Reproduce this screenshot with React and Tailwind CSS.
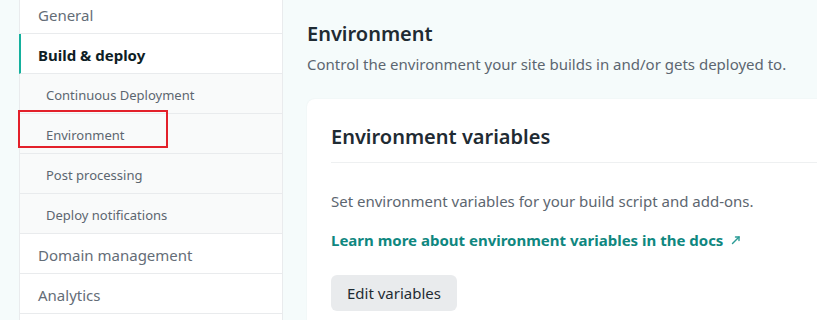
import React from "react";

const font = { fontFamily: '"Noto Sans", "Open Sans", sans-serif' };

const SubItem = ({ label, boxed }) => (
  <div className="relative h-10 pt-[4px] flex items-center pl-[26px] bg-[#f9fafa] border-b border-[#e9ebed] text-[13px] text-[#5c6670]">
    {label}
    {boxed && (
      <div className="absolute left-[-2px] top-[-4px] w-[150px] h-[38px] border-2 border-[#e3202a]" />
    )}
  </div>
);

const TopItem = ({ label }) => (
  <div className="h-10 pt-[4px] flex items-center pl-[18px] border-b border-[#e9ebed] text-[15px] text-[#646d77]">
    {label}
  </div>
);

const App = () => {
  return (
    <div className="flex h-[320px] w-[817px] overflow-hidden bg-[#f5fbfb]" style={font}>
      <div className="w-[19px] shrink-0" />
      <div className="w-[264px] shrink-0 bg-white border-x border-[#e9ebed] -mt-[6px] h-[340px]">
        <TopItem label="General" />
        <div className="h-10 pt-[4px] flex items-center pl-[17px] border-b border-[#e9ebed] border-l-2 border-l-[#15b09d] -ml-px text-[15px] font-bold text-[#0e1e25]">
          Build &amp; deploy
        </div>
        <SubItem label="Continuous Deployment" />
        <SubItem label="Environment" boxed />
        <SubItem label="Post processing" />
        <SubItem label="Deploy notifications" />
        <TopItem label="Domain management" />
        <TopItem label="Analytics" />
      </div>
      <div className="flex-1 pl-6 pt-[20px] min-w-0">
        <h1 className="text-[20px] font-semibold text-[#1f2b33] leading-7">Environment</h1>
        <p className="mt-[4px] text-[15px] text-[#5c6670] leading-6">
          Control the environment your site builds in and/or gets deployed to.
        </p>
        <div className="mt-[23px] w-[560px] h-[260px] bg-white rounded-lg shadow-[0_0_2px_rgba(0,0,0,0.06)]">
          <div className="mx-6 pt-[24px] pb-[11px] border-b border-[#eef0f1]">
            <h2 className="text-[20px] font-semibold text-[#1f2b33] leading-7">Environment variables</h2>
          </div>
          <div className="px-6 pt-[26px]">
            <p className="text-[15px] text-[#5c6670] leading-6">
              Set environment variables for your build script and add-ons.
            </p>
            <a className="mt-[15px] flex items-center gap-2 text-[15px] font-bold text-[#0f8780] leading-6">
              Learn more about environment variables in the docs
              <svg width="10" height="10" viewBox="0 0 10 10" fill="none" stroke="#2a9b95" strokeWidth="1.4" strokeLinecap="round">
                <path d="M1.5 8.5 L8 2" />
                <path d="M4.5 2 H8 V5.5" />
              </svg>
            </a>
            <button className="mt-[23px] h-9 px-4 rounded-md bg-[#e9ebed] text-[15px] text-[#1f2b33]">
              Edit variables
            </button>
          </div>
        </div>
      </div>
    </div>
  );
};

export default App;
